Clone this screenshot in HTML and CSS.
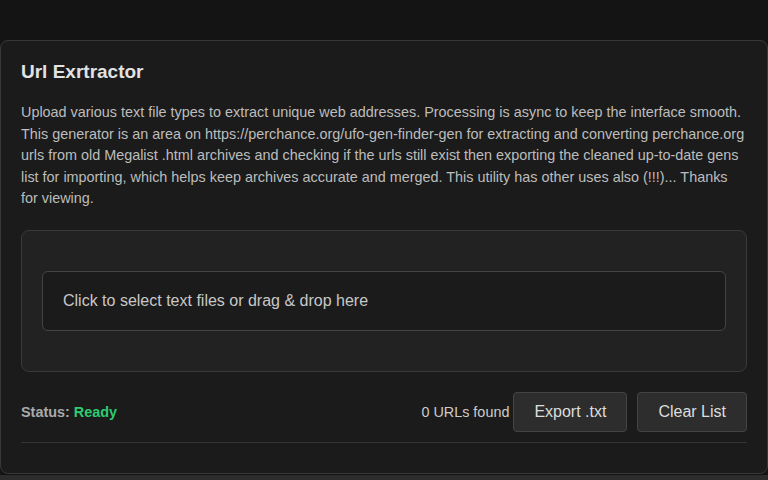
FILE: index.html
```html
<!DOCTYPE html>
<html lang="en">
<head>
<meta charset="utf-8">
<title>Url Exrtractor</title>
<link rel="stylesheet" href="styles.css">
</head>
<body>
<main class="card">
  <h2 class="title">Url Exrtractor</h2>
  <p class="desc">Upload various text file types to extract unique web addresses. Processing is async to keep the interface smooth. This generator is an area on https://perchance.org/ufo-gen-finder-gen for extracting and converting perchance.org urls from old Megalist .html archives and checking if the urls still exist then exporting the cleaned up-to-date gens list for importing, which helps keep archives accurate and merged. This utility has other uses also (!!!)... Thanks for viewing.</p>
  <section class="drop-wrap">
    <div class="drop">Click to select text files or drag &amp; drop here</div>
  </section>
  <div class="status-row">
    <div class="status">Status: <span class="ready">Ready</span></div>
    <div class="actions">
      <span class="count">0 URLs found</span>
      <button class="btn">Export .txt</button>
      <button class="btn">Clear List</button>
    </div>
  </div>
  <div class="results"></div>
</main>
<div class="next"></div>
</body>
</html>
```
FILE: styles.css
```css
html, body {
  margin: 0;
  padding: 0;
  background: #141414;
  font-family: "Liberation Sans", Arial, sans-serif;
  color: #bbbbbb;
}
body {
  padding-top: 40px;
}
.card {
  background: #1b1b1b;
  border: 1px solid #383838;
  border-radius: 8px;
  padding: 20px 20px 30px;
}
.title {
  margin: 0 0 19px;
  font-size: 19px;
  line-height: 22px;
  color: #e2e2e2;
  font-weight: bold;
}
.desc {
  margin: 0 0 20px;
  font-size: 14.4px;
  line-height: 21.6px;
  color: #bdbdbd;
}
.drop-wrap {
  background: #222222;
  border: 1px solid #3a3a3a;
  border-radius: 8px;
  padding: 40px 20px;
}
.drop {
  background: #1b1b1b;
  border: 1px solid #444444;
  border-radius: 6px;
  padding: 20px;
  font-size: 16px;
  line-height: 18px;
  color: #c8c8c8;
}
.status-row {
  display: flex;
  justify-content: space-between;
  align-items: center;
  margin-top: 20px;
  margin-bottom: 10px;
}
.status {
  font-size: 14.4px;
  font-weight: bold;
  color: #aaaaaa;
}
.ready {
  color: #2ecc71;
}
.actions {
  display: flex;
  align-items: center;
  gap: 10px;
}
.count {
  font-size: 14.4px;
  color: #cccccc;
  margin-right: -6px;
}
.btn {
  height: 40px;
  padding: 0 20px;
  background: #2d2d2d;
  border: 1px solid #444444;
  border-radius: 4px;
  color: #dddddd;
  font-family: "Liberation Sans", Arial, sans-serif;
  font-size: 16px;
}
.results {
  border-top: 1px solid #333333;
}
.next {
  height: 6px;
  background: #2c2c2c;
  margin-top: 1px;
}
```
